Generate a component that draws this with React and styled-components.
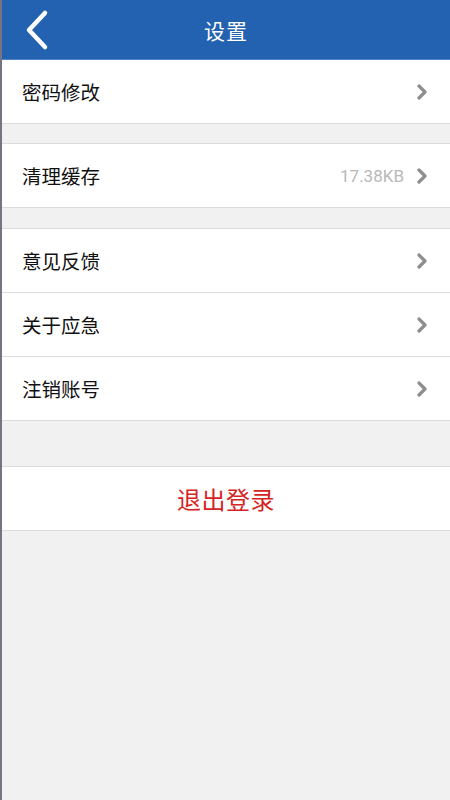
import React from "react";
import styled, { createGlobalStyle } from "styled-components";

const Global = createGlobalStyle`
  html, body { margin: 0; padding: 0; background: #f1f1f1; }
  body { font-family: "Noto Sans CJK SC", "Noto Sans", sans-serif; }
  #root { min-height: 100vh; }
`;

const Page = styled.div`
  min-height: 800px;
  background: #f1f1f1;
  border-left: 2px solid #77737f;
  box-sizing: border-box;
  display: flex;
  flex-direction: column;
`;

const Header = styled.header`
  height: 59px;
  background: #2262b0;
  border-bottom: 1px solid #4f84c6;
  display: flex;
  align-items: center;
  justify-content: center;
  position: relative;
`;

const BackButton = styled.button`
  position: absolute;
  left: 20px;
  top: 9px;
  width: 30px;
  height: 42px;
  padding: 0;
  border: none;
  background: none;
  display: flex;
  align-items: center;
  justify-content: center;
`;

const Title = styled.h1`
  margin: 0;
  font-size: 21px;
  font-weight: 400;
  color: #ffffff;
  letter-spacing: 1px;
`;

const Group = styled.section`
  background: #ffffff;
  border-top: ${(p) => (p.$noTop ? "none" : "1px solid #dcdcdc")};
  border-bottom: 1px solid #dcdcdc;
  margin-top: ${(p) => p.$gap || 0}px;
  display: flex;
  flex-direction: column;
`;

const Row = styled.div`
  height: 63px;
  display: flex;
  align-items: center;
  padding: 0 22px 0 20px;
  & + & { border-top: 1px solid #dcdcdc; }
`;

const Label = styled.span`
  flex: 1;
  font-size: 19.5px;
  color: #111111;
`;

const Value = styled.span`
  font-family: Roboto, "Noto Sans", sans-serif;
  font-size: 17px;
  color: #b8b8b8;
  margin-right: 12px;
`;

const Logout = styled.div`
  height: 63px;
  display: flex;
  align-items: center;
  justify-content: center;
  font-size: 24px;
  color: #d42424;
  letter-spacing: 0.5px;
`;

const Chevron = () => (
  <svg width="12" height="16" viewBox="0 0 12 16">
    <polyline
      points="3,2 9,8 3,14"
      fill="none"
      stroke="#8e8e8e"
      strokeWidth="3.2"
      strokeLinecap="round"
      strokeLinejoin="round"
    />
  </svg>
);

const BackIcon = () => (
  <svg width="26" height="42" viewBox="0 0 26 42">
    <polyline
      points="21,4 5,21 21,38"
      fill="none"
      stroke="#ffffff"
      strokeWidth="4.5"
      strokeLinecap="round"
      strokeLinejoin="round"
    />
  </svg>
);

const Item = ({ label, value }) => (
  <Row>
    <Label>{label}</Label>
    {value && <Value>{value}</Value>}
    <Chevron />
  </Row>
);

export default function App() {
  return (
    <>
      <Global />
      <Page>
        <Header>
          <BackButton aria-label="返回">
            <BackIcon />
          </BackButton>
          <Title>设置</Title>
        </Header>
        <Group $noTop>
          <Item label="密码修改" />
        </Group>
        <Group $gap={19}>
          <Item label="清理缓存" value="17.38KB" />
        </Group>
        <Group $gap={20}>
          <Item label="意见反馈" />
          <Item label="关于应急" />
          <Item label="注销账号" />
        </Group>
        <Group $gap={45}>
          <Logout>退出登录</Logout>
        </Group>
      </Page>
    </>
  );
}
